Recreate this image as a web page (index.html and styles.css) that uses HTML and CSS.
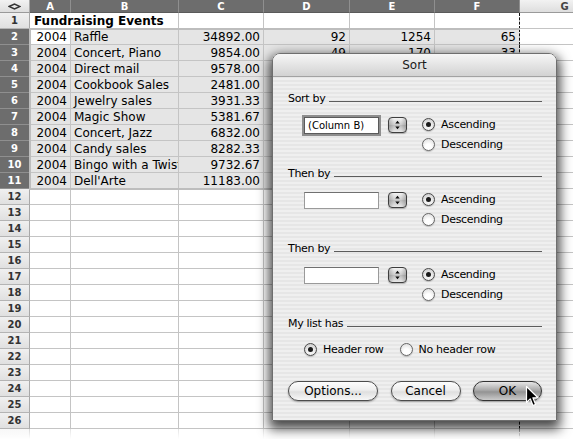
FILE: index.html
```html
<!DOCTYPE html>
<html>
<head>
<meta charset="utf-8">
<title>Sort</title>
<link rel="stylesheet" href="styles.css">
</head>
<body>
<div class="screen">
  <table class="sheet">
    <colgroup>
      <col class="c-hd"><col class="c-a"><col class="c-b"><col class="c-c"><col class="c-d"><col class="c-e"><col class="c-f"><col class="c-g">
    </colgroup>
    <thead>
      <tr>
        <th class="corner"><svg width="13" height="7" viewBox="0 0 13 7"><path d="M1 3.5 L6.5 1 L12 3.5 L6.5 6 Z" fill="none" stroke="#333" stroke-width="1.4"/></svg></th>
        <th class="sel">A</th><th class="sel">B</th><th class="sel">C</th><th class="sel">D</th><th class="sel">E</th><th class="sel">F</th><th>G</th>
      </tr>
    </thead>
    <tbody>
      <tr><th>1</th><td colspan="2" class="title">Fundraising Events</td><td></td><td></td><td></td><td class="pb"></td><td></td></tr>
      <tr class="s"><th>2</th><td class="n active">2004</td><td>Raffle</td><td class="n">34892.00</td><td class="n">92</td><td class="n">1254</td><td class="n pb">65</td><td class="g"></td></tr>
      <tr class="s"><th>3</th><td class="n">2004</td><td>Concert, Piano</td><td class="n">9854.00</td><td class="n">49</td><td class="n">170</td><td class="n pb">33</td><td class="g"></td></tr>
      <tr class="s"><th>4</th><td class="n">2004</td><td>Direct mail</td><td class="n">9578.00</td><td></td><td></td><td class="pb"></td><td class="g"></td></tr>
      <tr class="s"><th>5</th><td class="n">2004</td><td>Cookbook Sales</td><td class="n">2481.00</td><td></td><td></td><td class="pb"></td><td class="g"></td></tr>
      <tr class="s"><th>6</th><td class="n">2004</td><td>Jewelry sales</td><td class="n">3931.33</td><td></td><td></td><td class="pb"></td><td class="g"></td></tr>
      <tr class="s"><th>7</th><td class="n">2004</td><td>Magic Show</td><td class="n">5381.67</td><td></td><td></td><td class="pb"></td><td class="g"></td></tr>
      <tr class="s"><th>8</th><td class="n">2004</td><td>Concert, Jazz</td><td class="n">6832.00</td><td></td><td></td><td class="pb"></td><td class="g"></td></tr>
      <tr class="s"><th>9</th><td class="n">2004</td><td>Candy sales</td><td class="n">8282.33</td><td></td><td></td><td class="pb"></td><td class="g"></td></tr>
      <tr class="s"><th>10</th><td class="n">2004</td><td>Bingo with a Twist</td><td class="n">9732.67</td><td></td><td></td><td class="pb"></td><td class="g"></td></tr>
      <tr class="s"><th>11</th><td class="n">2004</td><td>Dell'Arte</td><td class="n">11183.00</td><td></td><td></td><td class="pb"></td><td class="g"></td></tr>
      <tr><th>12</th><td></td><td></td><td></td><td></td><td></td><td class="pb"></td><td></td></tr>
      <tr><th>13</th><td></td><td></td><td></td><td></td><td></td><td class="pb"></td><td></td></tr>
      <tr><th>14</th><td></td><td></td><td></td><td></td><td></td><td class="pb"></td><td></td></tr>
      <tr><th>15</th><td></td><td></td><td></td><td></td><td></td><td class="pb"></td><td></td></tr>
      <tr><th>16</th><td></td><td></td><td></td><td></td><td></td><td class="pb"></td><td></td></tr>
      <tr><th>17</th><td></td><td></td><td></td><td></td><td></td><td class="pb"></td><td></td></tr>
      <tr><th>18</th><td></td><td></td><td></td><td></td><td></td><td class="pb"></td><td></td></tr>
      <tr><th>19</th><td></td><td></td><td></td><td></td><td></td><td class="pb"></td><td></td></tr>
      <tr><th>20</th><td></td><td></td><td></td><td></td><td></td><td class="pb"></td><td></td></tr>
      <tr><th>21</th><td></td><td></td><td></td><td></td><td></td><td class="pb"></td><td></td></tr>
      <tr><th>22</th><td></td><td></td><td></td><td></td><td></td><td class="pb"></td><td></td></tr>
      <tr><th>23</th><td></td><td></td><td></td><td></td><td></td><td class="pb"></td><td></td></tr>
      <tr><th>24</th><td></td><td></td><td></td><td></td><td></td><td class="pb"></td><td></td></tr>
      <tr><th>25</th><td></td><td></td><td></td><td></td><td></td><td class="pb"></td><td></td></tr>
      <tr><th>26</th><td></td><td></td><td></td><td></td><td></td><td class="pb"></td><td></td></tr>
      <tr class="last"><th></th><td></td><td></td><td></td><td></td><td></td><td class="pb"></td><td></td></tr>
    </tbody>
  </table>

  <div class="selection"></div>
  <div class="fade"></div>

  <div class="dialog">
    <div class="titlebar">Sort</div>
    <div class="dbody">
      <section class="group">
        <div class="legend"><span>Sort by</span></div>
        <div class="grow">
          <div class="field focus">(Column B)</div>
          <div class="stepper"><svg width="17" height="14" viewBox="0 0 17 14"><path d="M6.3 5.6 L8.5 2.8 L10.7 5.6Z M6.3 8.4 L8.5 11.2 L10.7 8.4Z" fill="#0c0c0c"/></svg></div>
          <div class="radios">
            <div class="radio on"><i></i><span>Ascending</span></div>
            <div class="radio"><i></i><span>Descending</span></div>
          </div>
        </div>
      </section>
      <section class="group">
        <div class="legend"><span>Then by</span></div>
        <div class="grow">
          <div class="field"></div>
          <div class="stepper"><svg width="17" height="14" viewBox="0 0 17 14"><path d="M6.3 5.6 L8.5 2.8 L10.7 5.6Z M6.3 8.4 L8.5 11.2 L10.7 8.4Z" fill="#0c0c0c"/></svg></div>
          <div class="radios">
            <div class="radio on"><i></i><span>Ascending</span></div>
            <div class="radio"><i></i><span>Descending</span></div>
          </div>
        </div>
      </section>
      <section class="group">
        <div class="legend"><span>Then by</span></div>
        <div class="grow">
          <div class="field"></div>
          <div class="stepper"><svg width="17" height="14" viewBox="0 0 17 14"><path d="M6.3 5.6 L8.5 2.8 L10.7 5.6Z M6.3 8.4 L8.5 11.2 L10.7 8.4Z" fill="#0c0c0c"/></svg></div>
          <div class="radios">
            <div class="radio on"><i></i><span>Ascending</span></div>
            <div class="radio"><i></i><span>Descending</span></div>
          </div>
        </div>
      </section>
      <section class="group">
        <div class="legend"><span>My list has</span></div>
        <div class="hrow">
          <div class="radio on"><i></i><span>Header row</span></div>
          <div class="radio"><i></i><span>No header row</span></div>
        </div>
      </section>
      <div class="buttons">
        <div class="btn opt">Options...</div>
        <div class="btn cancel">Cancel</div>
        <div class="btn ok">OK</div>
      </div>
    </div>
  </div>

  <svg class="cursor" width="14" height="22" viewBox="0 0 14 22"><path d="M1.5 1.5 L1.5 17.5 L5.2 13.8 L8 20.5 L10.6 19.4 L7.9 12.8 L13 12.8 Z" fill="#000" stroke="#fff" stroke-width="1.2" stroke-linejoin="round"/></svg>
</div>
</body>
</html>
```

FILE: styles.css
```css
* { box-sizing: border-box; }
html, body { margin: 0; padding: 0; background: #fff; }

.screen {
  position: relative;
  width: 573px;
  height: 439px;
  overflow: hidden;
  font-family: "DejaVu Sans", Verdana, sans-serif;
  background: #fff;
}

/* ---------- spreadsheet ---------- */
.sheet {
  border-collapse: separate;
  border-spacing: 0;
  table-layout: fixed;
  width: 610px;
  font-size: 12px;
  color: #000;
}
.c-hd { width: 30px; }
.c-a { width: 41px; }
.c-b { width: 108px; }
.c-c { width: 85px; }
.c-d { width: 86px; }
.c-e { width: 85px; }
.c-f { width: 85px; }
.c-g { width: 90px; }

.sheet th, .sheet td {
  padding: 0 3px;
  border-right: 1px solid #c4c4c4;
  border-bottom: 1px solid #c4c4c4;
  overflow: hidden;
  white-space: nowrap;
  line-height: 14px;
  text-align: left;
  font-weight: normal;
  vertical-align: middle;
}
.sheet thead tr { height: 13px; }
.sheet tbody tr { height: 16px; }

.sheet thead th {
  font-size: 10px;
  font-weight: bold;
  line-height: 11px;
  text-align: center;
  color: #444;
  background: linear-gradient(#f2f2f2, #dedede);
  border-right-color: #a8a8a8;
  border-bottom-color: #9a9a9a;
}
.sheet thead th.sel {
  background: #6d6d6d;
  color: #fff;
  border-right-color: #8f8f8f;
  border-bottom-color: #5a5a5a;
}
.sheet thead th.corner { padding: 0; }
.sheet thead th.corner svg { display: block; margin: 1px auto 0; }

.sheet tbody th {
  font-size: 10px;
  font-weight: bold;
  text-align: center;
  color: #333;
  background: linear-gradient(#f0f0f0, #e0e0e0);
  border-right-color: #a8a8a8;
  border-bottom-color: #b4b4b4;
  padding: 0;
}
.sheet tbody tr.s th {
  background: #6d6d6d;
  color: #fff;
  border-bottom-color: #8f8f8f;
  border-right-color: #5a5a5a;
}

.sheet tbody tr.s td { background: #e5e5e5; }
.sheet tbody tr.s td.active,
.sheet tbody tr.s td.g { background: #fff; }

.sheet td.n { text-align: right; }
.sheet td.title { font-weight: bold; padding-left: 4px; }
.sheet td.pb { border-right: 1px dashed #111; }

.selection {
  position: absolute;
  left: 29px;
  top: 28px;
  width: 491px;
  height: 162px;
  border: 2px solid #bdbdbd;
  border-right: none;
  pointer-events: none;
}

.fade {
  position: absolute;
  left: 0;
  top: 429px;
  width: 573px;
  height: 10px;
  background: linear-gradient(rgba(255,255,255,0.55), #fff);
}

/* ---------- dialog ---------- */
.dialog {
  position: absolute;
  left: 272px;
  top: 53px;
  width: 285px;
  height: 368px;
  border: 1px solid #6e6e6e;
  border-radius: 8px 8px 0 0;
  box-shadow: 0 5px 12px 3px rgba(0, 0, 0, 0.72);
  background: repeating-linear-gradient(#efefef 0 2px, #e6e6e6 2px 4px);
  color: #000;
  display: flex;
  flex-direction: column;
}
.titlebar {
  height: 23px;
  border-radius: 7px 7px 0 0;
  border-bottom: 1px solid #a2a2a2;
  background: linear-gradient(#f6f6f6, #d2d2d2);
  text-align: center;
  font-size: 12px;
  line-height: 22px;
  color: #1a1a1a;
}
.dbody {
  padding: 15px 14px 0 15px;
  font-size: 11px;
  letter-spacing: -0.3px;
}
.group + .group { margin-top: 13px; }
.legend {
  display: flex;
  align-items: center;
  height: 14px;
  line-height: 14px;
}
.legend::after {
  content: "";
  flex: 1;
  border-top: 1px solid #5c5c5c;
  margin: 5px 0 0 4px;
}
.grow {
  display: flex;
  align-items: flex-start;
  margin-top: 8px;
  padding-left: 16px;
}
.field {
  width: 75px;
  height: 17px;
  margin-top: 3px;
  background: #fff;
  border: 1px solid #9a9a9a;
  border-top-color: #707070;
  font-size: 10px;
  letter-spacing: 0;
  line-height: 15px;
  padding-left: 3px;
}
.field.focus {
  border-color: #5a5a5a;
  box-shadow: 0 0 0 2px #8e8e8e;
}
.stepper {
  width: 19px;
  height: 16px;
  margin: 3px 0 0 9px;
  border: 1px solid #3e3e3e;
  border-radius: 4px;
  background: linear-gradient(90deg, rgba(0,0,0,0.18), rgba(0,0,0,0) 30%, rgba(0,0,0,0) 70%, rgba(0,0,0,0.18)),
              linear-gradient(#f4f4f4, #cdcdcd 50%, #bdbdbd 51%, #e8e8e8);
  box-shadow: 0 1px 1px rgba(0,0,0,0.25);
}
.stepper svg { display: block; }
.radios {
  margin-left: 15px;
  display: flex;
  flex-direction: column;
}
.radio {
  display: flex;
  align-items: center;
  height: 20px;
  gap: 6px;
}
.radio i {
  width: 13px;
  height: 13px;
  border-radius: 50%;
  border: 1px solid #666;
  background: radial-gradient(circle at 50% 70%, #ffffff 0 30%, #d6d6d6 100%);
  box-shadow: 0 1px 1px rgba(0,0,0,0.2);
  display: flex;
  align-items: center;
  justify-content: center;
  flex: none;
}
.radio.on i { border-color: #4a4a4a; background: radial-gradient(circle at 50% 70%, #f2f2f2 0 30%, #c2c2c2 100%); }
.radio.on i::after {
  content: "";
  width: 5px;
  height: 5px;
  border-radius: 50%;
  background: #1a1a1a;
}
.hrow {
  display: flex;
  margin-top: 8px;
  padding-left: 16px;
  gap: 16px;
}
.buttons {
  display: flex;
  justify-content: space-between;
  margin-top: 22px;
}
.btn {
  height: 20px;
  border: 1px solid #4c4c4c;
  border-radius: 10px;
  font-size: 12px;
  letter-spacing: 0;
  line-height: 18px;
  text-align: center;
  color: #000;
  background: linear-gradient(#fdfdfd 0%, #eeeeee 45%, #dfdfdf 55%, #f7f7f7 100%);
  box-shadow: 0 1px 2px rgba(0, 0, 0, 0.35);
}
.btn.opt { width: 90px; }
.btn.cancel { width: 70px; }
.btn.ok {
  width: 69px;
  border-color: #333;
  background: linear-gradient(#e6e6e6 0%, #a9a9a9 45%, #939393 55%, #cacaca 100%);
}

.cursor {
  position: absolute;
  left: 525px;
  top: 385px;
}
```
